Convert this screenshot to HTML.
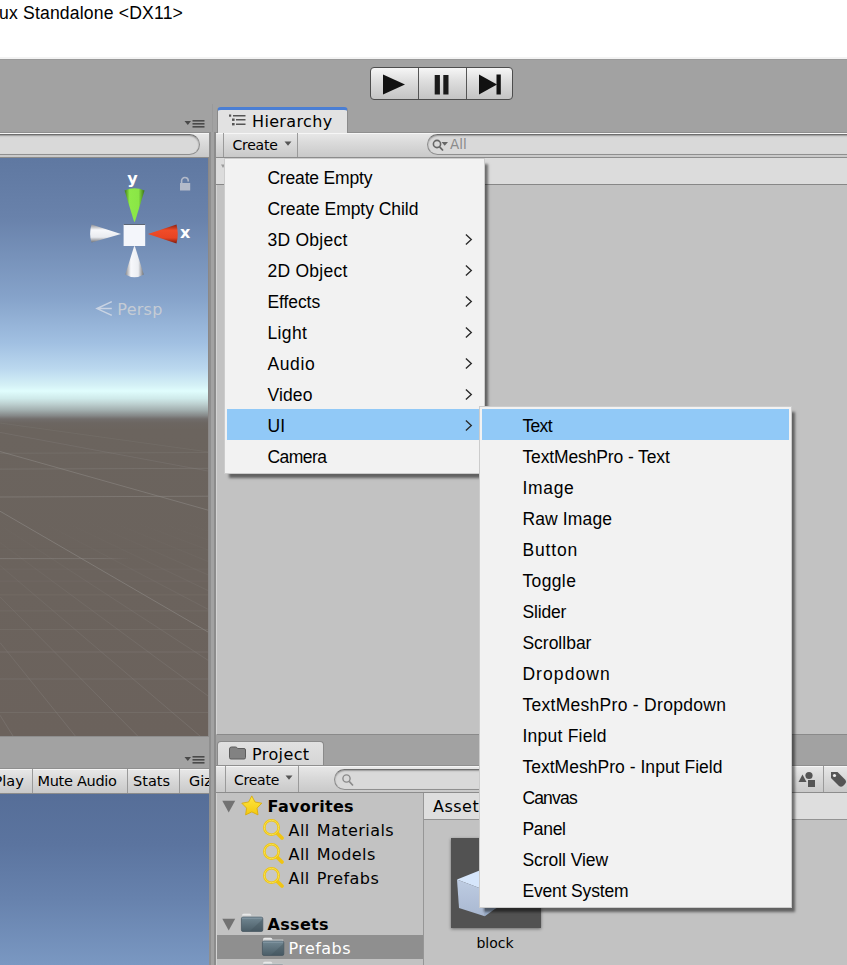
<!DOCTYPE html>
<html lang="en">
<head>
<meta charset="utf-8">
<title>Unity Editor</title>
<style>
html,body{margin:0;padding:0;}
body{width:847px;height:965px;overflow:hidden;position:relative;background:#a2a2a2;font-family:"DejaVu Sans","Liberation Sans",sans-serif;color:#000;}
.abs{position:absolute;}
#title{left:0;top:0;width:847px;height:59px;background:#fff;box-sizing:border-box;border-bottom:2px solid #f3f3f3;box-shadow:0 1px 0 #999;}
#title span{position:absolute;left:-1px;top:1px;font:17.6px/24px "Liberation Sans",sans-serif;color:#000;white-space:nowrap;letter-spacing:.17px;}
/* play buttons */
#play{left:370px;top:67px;width:143px;height:33px;border:1px solid #4d4d4d;border-radius:4px;box-sizing:border-box;background:linear-gradient(#f6f6f6,#dcdcdc 45%,#c4c4c4);}
#play i{position:absolute;top:0;width:1px;height:31px;background:#555;}
/* toolbars */
.tb{background:linear-gradient(#e8e8e8,#d9d9d9 45%,#c9c9c9);border-top:1px solid #8f8f8f;border-bottom:1px solid #8c8c8c;box-sizing:border-box;box-shadow:inset 0 1px 0 #f6f6f6;}
.search{box-sizing:border-box;border:1px solid #8c8c8c;border-top-color:#6e6e6e;border-bottom-color:#8f8f8f;background:#d9d9d9;border-radius:11px;box-shadow:inset 0 1px 1.5px rgba(0,0,0,.3);}
.tab{box-sizing:border-box;border:1px solid #8a8a8a;border-bottom:none;border-radius:4px 4px 0 0;white-space:nowrap;}
.utxt{font-family:"DejaVu Sans","Liberation Sans",sans-serif;white-space:nowrap;}
/* menus */
.menu{background:#f2f2f2;border:1px solid #ccc;box-sizing:border-box;box-shadow:4px 5px 2.5px -1px rgba(0,0,0,.5);padding:2px 2px;font:17.5px/35px "Liberation Sans",sans-serif;color:#000;}
.menu div{height:31px;white-space:nowrap;position:relative;letter-spacing:-0.1px;overflow:hidden;}
.menu .hl{background:#91c9f7;}
.menu svg{position:absolute;top:9.5px;}
</style>
</head>
<body>
<div id="title" class="abs"><span>ux Standalone &lt;DX11&gt;</span></div>

<!-- play / pause / step -->
<div id="play" class="abs">
  <i style="left:46.5px"></i><i style="left:94.5px"></i>
  <svg class="abs" style="left:0;top:0" width="141" height="30" viewBox="0 0 141 30">
    <polygon points="12,6.5 12,26.5 34,16.5" fill="#111"/>
    <rect x="63.7" y="7" width="5.2" height="19.5" fill="#1a1a1a"/><rect x="72.3" y="7" width="5.2" height="19.5" fill="#1a1a1a"/>
    <polygon points="108,6.5 108,26.5 126,16.5" fill="#111"/><rect x="125.5" y="6.5" width="4.3" height="20" fill="#111"/>
  </svg>
</div>

<!-- ============ LEFT: scene pane ============ -->
<svg class="abs" style="left:183.5px;top:118.5px" width="22" height="10" viewBox="0 0 22 10">
  <polygon points="0.5,2 7,2 3.8,6" fill="#4a4a4a"/>
  <rect x="8.5" y="1" width="12" height="1.6" fill="#4a4a4a"/><rect x="8.5" y="4" width="12" height="1.6" fill="#4a4a4a"/><rect x="8.5" y="7" width="12" height="1.6" fill="#4a4a4a"/>
</svg>
<div class="abs tb" style="left:0;top:132px;width:209px;height:26px;"></div>
<div class="abs search" style="left:-30px;top:134px;width:230px;height:21px;"></div>
<div id="scene" class="abs" style="left:0;top:158px;width:207.5px;height:578px;border-right:2px solid #8b8887;border-bottom:1.5px solid #8e8e8e;overflow:hidden;background:linear-gradient(#5f78a1 0px,#6982ab 60px,#86a3ca 140px,#a1c0e2 185px,#bbd8ef 211px,#d4f0f6 227px,#e0fdfd 233px,#cfeaea 240.5px,#bdd0d0 246px,#a3b0b0 252px,#868989 257.6px,#716d6b 261px,#6c6661 265px,#6b645e 272px,#6b625c 579px);">
  <svg class="abs" style="left:0;top:0" width="209" height="579" viewBox="0 158 209 579">
    <!-- ground grid -->
    <defs><linearGradient id="fade" gradientUnits="userSpaceOnUse" x1="0" y1="520" x2="0" y2="737"><stop offset="0" stop-color="#8a8683" stop-opacity="0"/><stop offset=".35" stop-color="#8a8683" stop-opacity=".2"/><stop offset="1" stop-color="#8a8683" stop-opacity=".36"/></linearGradient>
    <linearGradient id="fadeh" gradientUnits="userSpaceOnUse" x1="0" y1="0" x2="130" y2="0"><stop offset="0" stop-color="#908c89" stop-opacity=".5"/><stop offset=".8" stop-color="#908c89" stop-opacity=".35"/><stop offset="1" stop-color="#908c89" stop-opacity="0"/></linearGradient></defs>
    <g fill="none" stroke-width="1">
      <line x1="0" y1="451.5" x2="209" y2="510.4" stroke="#908c89" stroke-opacity="0.52"/>
      <line x1="0" y1="511.2" x2="209" y2="632.6" stroke="#908c89" stroke-opacity="0.56"/>
      <line x1="0" y1="432.4" x2="209" y2="471.2" stroke="#908c89" stroke-opacity="0.24"/>
      <line x1="0" y1="423.0" x2="209" y2="452.0" stroke="#908c89" stroke-opacity="0.17"/>
      <line x1="0" y1="525.0" x2="209" y2="660.9" stroke="url(#fade)"/>
      <line x1="0" y1="542.5" x2="209" y2="696.7" stroke="url(#fade)"/>
      <line x1="0" y1="565.5" x2="209" y2="743.7" stroke="url(#fade)"/>
      <line x1="0" y1="596.9" x2="209" y2="808.1" stroke="url(#fade)"/>
      <line x1="0" y1="642.6" x2="209" y2="901.8" stroke="url(#fade)"/>
      <line x1="0" y1="715.2" x2="209" y2="1050.3" stroke="url(#fade)"/>
      <line x1="0" y1="454.5" x2="209" y2="516.6" stroke="url(#fade)"/>
      <line x1="0" y1="457.9" x2="209" y2="523.6" stroke="url(#fade)"/>
      <line x1="0" y1="461.8" x2="209" y2="531.4" stroke="url(#fade)"/>
      <line x1="0" y1="466.1" x2="209" y2="540.2" stroke="url(#fade)"/>
      <line x1="0" y1="471.0" x2="209" y2="550.3" stroke="url(#fade)"/>
      <line x1="0" y1="476.6" x2="209" y2="561.8" stroke="url(#fade)"/>
      <line x1="0" y1="483.2" x2="209" y2="575.3" stroke="url(#fade)"/>
      <line x1="0" y1="490.9" x2="209" y2="591.0" stroke="url(#fade)"/>
      <line x1="0" y1="500.1" x2="209" y2="609.8" stroke="url(#fade)"/>
      <line x1="0" y1="453.3" x2="209" y2="452.5" stroke="#908c89" stroke-opacity="0.21"/>
      <line x1="0" y1="469.1" x2="209" y2="468.3" stroke="#908c89" stroke-opacity="0.32"/>
      <line x1="0" y1="497.0" x2="209" y2="496.2" stroke="#908c89" stroke-opacity="0.49"/>
      <line x1="0" y1="558.6" x2="130" y2="558.6" stroke="url(#fadeh)"/>
      <line x1="0" y1="712.4" x2="209" y2="712.4" stroke="#8a8683" stroke-opacity="0.32"/>
      <line x1="0" y1="679.0" x2="209" y2="679.0" stroke="#8a8683" stroke-opacity="0.32"/>
      <line x1="0" y1="652.0" x2="209" y2="652.0" stroke="#8a8683" stroke-opacity="0.30"/>
      <line x1="0" y1="629.6" x2="209" y2="629.6" stroke="#8a8683" stroke-opacity="0.27"/>
      <line x1="0" y1="610.9" x2="209" y2="610.9" stroke="#8a8683" stroke-opacity="0.23"/>
      <line x1="0" y1="594.9" x2="209" y2="594.9" stroke="#8a8683" stroke-opacity="0.20"/>
      <line x1="0" y1="581.2" x2="209" y2="581.2" stroke="#8a8683" stroke-opacity="0.15"/>
      <line x1="0" y1="569.2" x2="209" y2="569.2" stroke="#8a8683" stroke-opacity="0.12"/>
      <line x1="0" y1="549.3" x2="209" y2="549.3" stroke="#8a8683" stroke-opacity="0.06"/>
      <line x1="0" y1="541.0" x2="209" y2="541.0" stroke="#8a8683" stroke-opacity="0.02"/>
    </g>
    <!-- gizmo -->
    <defs>
      <linearGradient id="gy" x1="0" x2="1"><stop offset="0" stop-color="#3f7a18"/><stop offset=".25" stop-color="#8eea48"/><stop offset=".7" stop-color="#8ae646"/><stop offset="1" stop-color="#3c7316"/></linearGradient>
      <linearGradient id="gx" y1="0" y2="1" x2="0"><stop offset="0" stop-color="#8a2110"/><stop offset=".3" stop-color="#f04c28"/><stop offset=".7" stop-color="#e84423"/><stop offset="1" stop-color="#7a1b0c"/></linearGradient>
      <linearGradient id="gwl" y1="0" y2="1" x2="0"><stop offset="0" stop-color="#8d8f94"/><stop offset=".3" stop-color="#f7f8fb"/><stop offset=".7" stop-color="#e9ebef"/><stop offset="1" stop-color="#6e7075"/></linearGradient>
      <linearGradient id="gwb" x1="0" x2="1"><stop offset="0" stop-color="#85878c"/><stop offset=".3" stop-color="#f7f8fb"/><stop offset=".7" stop-color="#eceef2"/><stop offset="1" stop-color="#6e7075"/></linearGradient>
    </defs>
    <path d="M124.6,190.5 Q134.5,186 144.5,190.5 L134.9,221.8 L134.1,221.8 Z" fill="url(#gy)"/>
    <path d="M148,234 L176.5,224.5 Q179,234 176.5,243.6 Z" fill="url(#gx)"/>
    <path d="M121,234 L91.5,224.5 Q88.8,233.5 91.5,242.6 Z" fill="url(#gwl)"/>
    <path d="M134.1,246.3 L134.9,246.3 L143.8,274.5 Q134.5,280 125.3,274.5 Z" fill="url(#gwb)"/>
    <rect x="123.6" y="224.2" width="21.6" height="21.8" fill="#f4f6fb"/>
    <rect x="123.6" y="224" width="21.6" height="1" fill="#5b6472"/>
    <text x="127.3" y="184.3" font-family="DejaVu Sans, Liberation Sans, sans-serif" font-weight="bold" font-size="16" fill="#fff">y</text>
    <text x="180" y="238.2" font-family="DejaVu Sans, Liberation Sans, sans-serif" font-weight="bold" font-size="16" fill="#fff">x</text>
    <!-- lock -->
    <g fill="none" stroke="#b3bac9" stroke-width="1.6"><path d="M181.6,183 v-2.2 a3.3,3.3 0 0 1 6.6,0 v0.7"/></g>
    <rect x="180" y="183" width="10.2" height="7.5" fill="#b3bac9"/>
    <!-- persp -->
    <g stroke="#d3dbe6" stroke-width="1.5" fill="none" opacity=".85"><path d="M111.8,301.6 L97,308.6 L111.8,315.4 M97,308.6 L111.8,308.6"/></g>
    <text x="117.3" y="314.6" font-family="DejaVu Sans, Liberation Sans, sans-serif" font-size="16" letter-spacing=".25" fill="#cfd2d6" opacity=".85">Persp</text>
  </svg>
</div>

<!-- ============ divider ============ -->
<div class="abs" style="left:209.4px;top:132px;width:1.2px;height:833px;background:#8f8f8f;"></div>
<div class="abs" style="left:214px;top:132px;width:2px;height:833px;background:#8c8c8c;"></div>

<div class="abs" style="left:212px;top:104px;width:1px;height:28px;background:#9a9a9a;"></div>
<!-- ============ RIGHT TOP: Hierarchy ============ -->
<div class="abs" style="left:216px;top:157px;width:631px;height:28px;background:#dcdcdc;border-bottom:1px solid #878787;box-sizing:border-box;"></div>
<div class="abs" style="left:216px;top:185px;width:631px;height:550px;background:#c2c2c2;border-bottom:1px solid #8a8a8a;border-left:1px solid #d4d4d4;box-sizing:border-box;"></div>
<svg class="abs" style="left:221px;top:164px" width="5" height="5" viewBox="0 0 5 5"><polygon points="0,0.5 4,0.5 2,4" fill="#9a9a9a"/></svg>
<div class="abs tb" style="left:216px;top:132px;width:631px;height:26px;"></div>
<div class="abs tab" style="left:217px;top:107px;width:131px;height:26px;background:#e2e2e2;border-top:3px solid #4a7ed4;">
  <svg class="abs" style="left:11px;top:3.5px" width="18" height="13" viewBox="0 0 18 13">
    <g fill="#555"><rect x="0" y="0.5" width="2.2" height="2.2"/><rect x="3" y="4.5" width="2.6" height="2.4"/><rect x="3" y="9" width="2.6" height="2.4"/>
    <rect x="4" y="1" width="12.5" height="1.5"/><rect x="7" y="5" width="9.5" height="1.5"/><rect x="7" y="9.5" width="9.5" height="1.5"/></g>
  </svg>
  <span class="abs utxt" style="left:34px;top:1px;font-size:16px;line-height:22px;letter-spacing:.35px;">Hierarchy</span>
</div>
<div class="abs" style="left:223px;top:133px;width:1px;height:24px;background:#9a9a9a;"></div>
<div class="abs" style="left:297px;top:133px;width:1px;height:24px;background:#9a9a9a;"></div>
<span class="abs utxt" style="left:232.5px;top:133.5px;font-size:14px;line-height:22px;letter-spacing:-.25px;">Create</span>
<svg class="abs" style="left:284px;top:141px" width="9" height="6" viewBox="0 0 9 6"><polygon points="0.5,0.5 7.5,0.5 4,4.8" fill="#555"/></svg>
<div class="abs search" style="left:427px;top:134px;width:460px;height:21px;"></div>
<svg class="abs" style="left:431px;top:138px" width="20" height="14" viewBox="0 0 20 14">
  <circle cx="6" cy="6" r="3.6" fill="none" stroke="#666" stroke-width="1.6"/><line x1="8.6" y1="8.8" x2="12" y2="12.5" stroke="#666" stroke-width="1.8"/>
  <polygon points="10.5,4 17,4 13.7,7.8" fill="#666"/>
</svg>
<span class="abs utxt" style="left:450px;top:134px;font-size:13.5px;line-height:21px;color:#8b8b8b;">All</span>

<!-- ============ LEFT BOTTOM: Game ============ -->
<svg class="abs" style="left:183.5px;top:754.5px" width="22" height="10" viewBox="0 0 22 10">
  <polygon points="0.5,2 7,2 3.8,6" fill="#4a4a4a"/>
  <rect x="8.5" y="1" width="12" height="1.6" fill="#4a4a4a"/><rect x="8.5" y="4" width="12" height="1.6" fill="#4a4a4a"/><rect x="8.5" y="7" width="12" height="1.6" fill="#4a4a4a"/>
</svg>
<div class="abs tb" style="left:0;top:768px;width:209px;height:26px;overflow:hidden;">
  <i class="abs" style="left:32px;top:0;width:1px;height:25px;background:#9a9a9a;"></i>
  <i class="abs" style="left:127px;top:0;width:1px;height:25px;background:#9a9a9a;"></i>
  <i class="abs" style="left:179px;top:0;width:1px;height:25px;background:#9a9a9a;"></i>
  <span class="abs utxt" style="left:-6.5px;top:1px;font-size:14.5px;line-height:23px;">Play</span>
  <span class="abs utxt" style="left:37.5px;top:1px;font-size:14.5px;line-height:23px;letter-spacing:-.3px;">Mute Audio</span>
  <span class="abs utxt" style="left:133px;top:1px;font-size:14.5px;line-height:23px;">Stats</span>
  <span class="abs utxt" style="left:189px;top:1px;font-size:14.5px;line-height:23px;">Gizmos</span>
</div>
<div class="abs" style="left:0;top:794px;width:209px;height:171px;background:linear-gradient(#566e98,#5b749f 50px,#6782ad 105px,#7a98c2 171px);"></div>

<!-- ============ RIGHT BOTTOM: Project ============ -->
<div class="abs tab" style="left:217px;top:741px;width:107px;height:25px;background:linear-gradient(#e1e1e1,#d5d5d5);">
  <svg class="abs" style="left:11px;top:4px" width="17" height="14" viewBox="0 0 17 14">
    <path d="M0.5,3 Q0.5,1 2.5,1 L6.5,1 Q8,1 8.5,2.5 L15,2.5 Q16.5,2.5 16.5,4 L16.5,11.5 Q16.5,13 15,13 L2,13 Q0.5,13 0.5,11.5 Z" fill="#828282" stroke="#5c5c5c" stroke-width="1"/>
  </svg>
  <span class="abs utxt" style="left:34px;top:1px;font-size:16px;line-height:24px;letter-spacing:.4px;">Project</span>
</div>
<div class="abs tb" style="left:216px;top:765px;width:631px;height:28px;"></div>
<div class="abs" style="left:225px;top:766px;width:1px;height:26px;background:#9a9a9a;"></div>
<div class="abs" style="left:298px;top:766px;width:1px;height:26px;background:#9a9a9a;"></div>
<span class="abs utxt" style="left:234px;top:768px;font-size:14px;line-height:24px;letter-spacing:-.25px;">Create</span>
<svg class="abs" style="left:285px;top:775px" width="9" height="6" viewBox="0 0 9 6"><polygon points="0.5,0.5 7.5,0.5 4,4.8" fill="#555"/></svg>
<div class="abs search" style="left:334px;top:769px;width:452px;height:21px;"></div>
<svg class="abs" style="left:341px;top:773px" width="14" height="14" viewBox="0 0 14 14">
  <circle cx="5.5" cy="5.5" r="3.6" fill="none" stroke="#8a8a8a" stroke-width="1.4"/><line x1="8.2" y1="8.4" x2="12" y2="12.5" stroke="#8a8a8a" stroke-width="1.6"/>
</svg>
<div class="abs" style="left:823px;top:766px;width:1px;height:26px;background:#9a9a9a;"></div>
<svg class="abs" style="left:797px;top:770px" width="50" height="19" viewBox="0 0 50 19">
  <g fill="#555"><circle cx="12" cy="5.5" r="3.6"/><polygon points="1.5,12 9.5,12 5.5,4.5"/><rect x="11" y="10" width="7" height="7"/></g>
  <g fill="#555"><path d="M34,2 L40.5,2 L48.5,10 Q50,12 48,14 L46,16 Q44,17.5 42,16 L34,8 Z"/></g><circle cx="37.5" cy="5.5" r="1.6" fill="#eee"/>
</svg>
<!-- tree -->
<div class="abs" style="left:216px;top:793px;width:207px;height:172px;background:#c2c2c2;border-left:1px solid #d4d4d4;box-sizing:border-box;"></div>
<div class="abs" style="left:423px;top:793px;width:1px;height:172px;background:#969696;"></div>
<div class="abs" style="left:424px;top:793px;width:423px;height:172px;background:#c2c2c2;"></div>
<div class="abs" style="left:424px;top:793px;width:423px;height:27px;background:#dedede;border-bottom:1px solid #939393;box-sizing:border-box;"></div>
<span class="abs utxt" style="left:433px;top:795px;font-size:16px;line-height:24px;letter-spacing:.5px;">Assets</span>
<div class="abs" style="left:217px;top:935px;width:206px;height:24px;background:#8f8f8f;"></div>
<svg class="abs" style="left:217px;top:793px" width="206" height="172" viewBox="217 793 206 172">
  <defs>
    <linearGradient id="fold" x2="0" y2="1"><stop offset="0" stop-color="#73889a"/><stop offset=".15" stop-color="#6c818c"/><stop offset="1" stop-color="#4b5d67"/></linearGradient><linearGradient id="ftab" x2="0" y2="1"><stop offset="0" stop-color="#f2f2f2"/><stop offset="1" stop-color="#b9bcbe"/></linearGradient>
    <linearGradient id="starg" x2="0" y2="1"><stop offset="0" stop-color="#ffe63f"/><stop offset="1" stop-color="#f3c90f"/></linearGradient>
    <g id="mag"><circle cx="9" cy="9" r="7.2" fill="#f6f3e4" fill-opacity=".12" stroke="#efc414" stroke-width="2.6"/><line x1="14.5" y1="14.5" x2="19.5" y2="19.5" stroke="#efc414" stroke-width="3.8" stroke-linecap="round"/><circle cx="9" cy="9" r="7.2" fill="none" stroke="#f7e24a" stroke-width="1"/></g>
    <g id="folder"><path d="M1,4.5 L1,2.2 Q1,0.6 2.6,0.6 L8.6,0.6 Q10.2,0.6 10.4,2.2 L10.6,4.5 Z" fill="url(#ftab)"/><rect x="10" y="2.3" width="11.2" height="2.4" fill="#c6c9cb"/><rect x="0.4" y="3.9" width="21.4" height="14.4" rx="1.6" fill="url(#fold)" stroke="#42525b" stroke-width=".7"/><polygon points="9,17.8 21.2,6.5 21.2,17.8" fill="#3f5059" opacity=".35"/><rect x="1" y="4.4" width="20.2" height="1" fill="#8fa2ac" opacity=".8"/></g>
  </defs>
  <polygon points="222.3,800.8 235.2,800.8 228.7,812.6" fill="#727272"/>
  <polygon points="251.8,795.9 255.0,802.0 261.8,803.2 257.0,808.1 258.0,814.9 251.8,811.9 245.6,814.9 246.6,808.1 241.8,803.2 248.6,802.0" fill="url(#starg)" stroke="#d9ad0e" stroke-width=".9" stroke-linejoin="round"/>
  <use href="#mag" x="262.5" y="818.5"/><use href="#mag" x="262.5" y="842.5"/><use href="#mag" x="262.5" y="866.5"/>
  <polygon points="222.3,918.8 235.2,918.8 228.7,930.6" fill="#727272"/>
  <use href="#folder" x="241" y="913.2"/>
  <use href="#folder" x="262" y="937.2"/>
  <use href="#folder" x="262" y="961.2"/>
  <g font-family="DejaVu Sans, Liberation Sans, sans-serif" font-size="16">
    <text x="267.6" y="811.8" font-weight="bold" letter-spacing=".3">Favorites</text>
    <text x="288.5" y="835.8" word-spacing="1.5" letter-spacing=".45">All Materials</text>
    <text x="288.5" y="859.8" word-spacing="1.5" letter-spacing=".45">All Models</text>
    <text x="288.5" y="883.8" word-spacing="1.5" letter-spacing=".45">All Prefabs</text>
    <text x="267.6" y="929.8" font-weight="bold" letter-spacing=".3">Assets</text>
    <text x="288.5" y="953.8" fill="#fff" letter-spacing=".45">Prefabs</text>
  </g>
</svg>
<!-- asset thumb -->
<div class="abs" style="left:451px;top:838px;width:90px;height:90px;background:#525252;box-shadow:0 1px 3px rgba(0,0,0,.45);"></div>
<svg class="abs" style="left:451px;top:838px" width="90" height="90" viewBox="451 838 90 90">
  <defs><linearGradient id="cl" x2="0" y2="1"><stop offset="0" stop-color="#becce2"/><stop offset="1" stop-color="#a9b8d1"/></linearGradient></defs>
  <polygon points="457,879.6 479.5,870.6 522,876 486,890.5" fill="#d6e6fb"/>
  <polygon points="457,879.6 486,890.5 484.8,916.2 459,908" fill="url(#cl)"/>
  <polygon points="486,890.5 522,876 514,898 494.5,909.3 484.8,916.2" fill="#9cb0cc"/>
</svg>
<span class="abs utxt" style="left:455px;top:932px;width:80px;text-align:center;font-size:14px;line-height:22px;">block</span>

<!-- ============ MENUS ============ -->
<div class="abs menu" id="m1" style="left:224px;top:158px;width:261px;height:316px;">
  <div style="padding-left:40.4px;letter-spacing:-0.17px;">Create Empty</div>
  <div style="padding-left:40.4px;letter-spacing:-0.04px;">Create Empty Child</div>
  <div style="padding-left:40.4px;letter-spacing:0.28px;">3D Object<svg style="left:238px" width="8" height="13" viewBox="0 0 8 13"><path d="M0.9,1.4 L6.3,6.5 L0.9,11.6" fill="none" stroke="#2a2a2a" stroke-width="1.35"/></svg></div>
  <div style="padding-left:40.4px;letter-spacing:0.28px;">2D Object<svg style="left:238px" width="8" height="13" viewBox="0 0 8 13"><path d="M0.9,1.4 L6.3,6.5 L0.9,11.6" fill="none" stroke="#2a2a2a" stroke-width="1.35"/></svg></div>
  <div style="padding-left:40.4px;letter-spacing:-0.07px;">Effects<svg style="left:238px" width="8" height="13" viewBox="0 0 8 13"><path d="M0.9,1.4 L6.3,6.5 L0.9,11.6" fill="none" stroke="#2a2a2a" stroke-width="1.35"/></svg></div>
  <div style="padding-left:40.4px;letter-spacing:0.4px;">Light<svg style="left:238px" width="8" height="13" viewBox="0 0 8 13"><path d="M0.9,1.4 L6.3,6.5 L0.9,11.6" fill="none" stroke="#2a2a2a" stroke-width="1.35"/></svg></div>
  <div style="padding-left:40.4px;letter-spacing:0.65px;">Audio<svg style="left:238px" width="8" height="13" viewBox="0 0 8 13"><path d="M0.9,1.4 L6.3,6.5 L0.9,11.6" fill="none" stroke="#2a2a2a" stroke-width="1.35"/></svg></div>
  <div style="padding-left:40.4px;letter-spacing:0.15px;">Video<svg style="left:238px" width="8" height="13" viewBox="0 0 8 13"><path d="M0.9,1.4 L6.3,6.5 L0.9,11.6" fill="none" stroke="#2a2a2a" stroke-width="1.35"/></svg></div>
  <div class="hl" style="padding-left:40.4px;letter-spacing:0.1px;">UI<svg style="left:238px" width="8" height="13" viewBox="0 0 8 13"><path d="M0.9,1.4 L6.3,6.5 L0.9,11.6" fill="none" stroke="#2a2a2a" stroke-width="1.35"/></svg></div>
  <div style="padding-left:40.4px;letter-spacing:-0.54px;">Camera</div>
</div>
<div class="abs menu" id="m2" style="left:479px;top:406px;width:313px;height:502px;">
  <div class="hl" style="padding-left:40.4px;letter-spacing:-0.63px;">Text</div>
  <div style="padding-left:40.4px;letter-spacing:-0.12px;">TextMeshPro - Text</div>
  <div style="padding-left:40.4px;letter-spacing:0.7px;">Image</div>
  <div style="padding-left:40.4px;letter-spacing:0.14px;">Raw Image</div>
  <div style="padding-left:40.4px;letter-spacing:0.86px;">Button</div>
  <div style="padding-left:40.4px;letter-spacing:0.38px;">Toggle</div>
  <div style="padding-left:40.4px;letter-spacing:-0.14px;">Slider</div>
  <div style="padding-left:40.4px;letter-spacing:0.0px;">Scrollbar</div>
  <div style="padding-left:40.4px;letter-spacing:1.09px;">Dropdown</div>
  <div style="padding-left:40.4px;letter-spacing:0.29px;">TextMeshPro - Dropdown</div>
  <div style="padding-left:40.4px;letter-spacing:0.25px;">Input Field</div>
  <div style="padding-left:40.4px;letter-spacing:0.03px;">TextMeshPro - Input Field</div>
  <div style="padding-left:40.4px;letter-spacing:-0.82px;">Canvas</div>
  <div style="padding-left:40.4px;letter-spacing:-0.29px;">Panel</div>
  <div style="padding-left:40.4px;letter-spacing:-0.05px;">Scroll View</div>
  <div style="padding-left:40.4px;letter-spacing:-0.16px;">Event System</div>
</div>
</body>
</html>
